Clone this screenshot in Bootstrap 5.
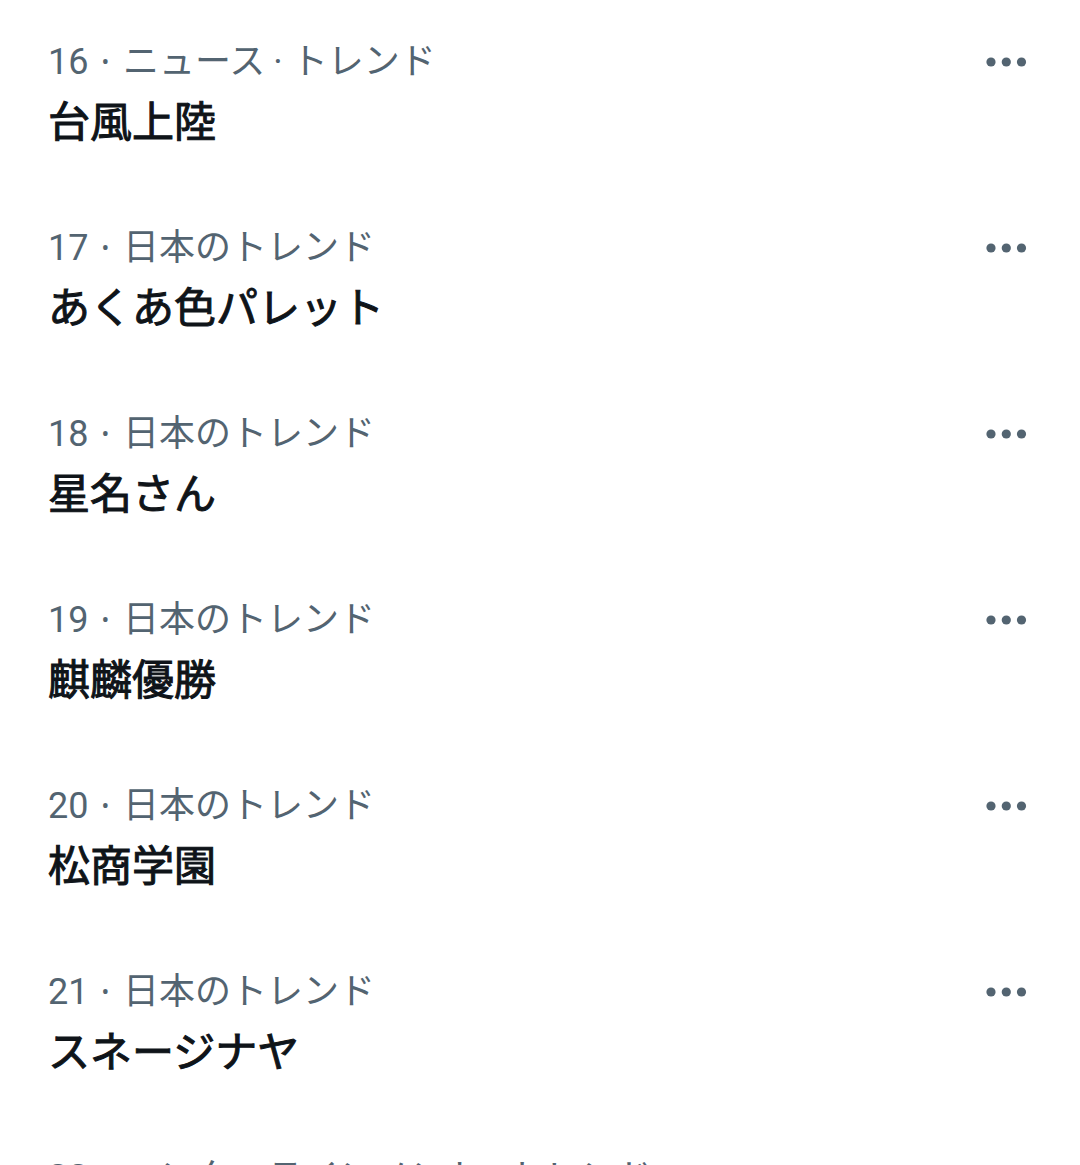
<!DOCTYPE html>
<html lang="ja">
<head>
<meta charset="utf-8">
<meta name="viewport" content="width=device-width, initial-scale=1">
<title>トレンド</title>
<link href="https://cdn.jsdelivr.net/npm/bootstrap@5.3.0/dist/css/bootstrap.min.css" rel="stylesheet">
<style>
  body { font-family: Roboto, "Noto Sans CJK JP", sans-serif; color: #0f1419; background: #fff; }
  .trend-list { height: 100vh; overflow: hidden; padding-top: 34px; }
  .trend-item { padding: 0 48px; height: 186px; }
  .trend-meta { color: #536471; font-size: 36px; line-height: 48px; }
  .trend-dot { margin: 0 4px 0 3px; font-family: "Noto Sans", sans-serif; }
  .trend-topic { font-family: "Noto Sans CJK JP", sans-serif; }
  .topic-dot { font-family: Roboto, sans-serif; margin-right: 1px; }
  .trend-name { font-size: 42px; line-height: 60px; margin-top: 7px; font-weight: 400; -webkit-text-stroke: 1px #0f1419; }
  .trend-name a { color: #0f1419; }
  .trend-more { color: #536471; width: 48px; height: 48px; margin-right: 2px; margin-top: 4px; line-height: 1; }
</style>
<script src="https://cdn.jsdelivr.net/npm/bootstrap@5.3.0/dist/js/bootstrap.bundle.min.js" defer></script>
</head>
<body>
<svg class="d-none" aria-hidden="true"><symbol id="more" viewBox="0 0 48 48"><circle cx="9" cy="24" r="4.6"/><circle cx="24.3" cy="24" r="4.6"/><circle cx="39.5" cy="24" r="4.6"/></symbol></svg>
<main class="trend-list">
<ul class="list-unstyled mb-0">
  <li class="trend-item d-flex justify-content-between align-items-start"><div class="text-nowrap"><div class="trend-meta">16 <span class="trend-dot">·</span> <span class="trend-topic">ニュース <span class="topic-dot">·</span> トレンド</span></div><h2 class="trend-name mb-0"><a class="text-decoration-none" href="#">台風上陸</a></h2></div><button type="button" class="trend-more btn p-0 border-0" aria-label="もっと見る"><svg class="d-block" width="48" height="48" fill="currentColor"><use href="#more"/></svg></button></li>
  <li class="trend-item d-flex justify-content-between align-items-start"><div class="text-nowrap"><div class="trend-meta">17 <span class="trend-dot">·</span> <span class="trend-topic">日本のトレンド</span></div><h2 class="trend-name mb-0"><a class="text-decoration-none" href="#">あくあ色パレット</a></h2></div><button type="button" class="trend-more btn p-0 border-0" aria-label="もっと見る"><svg class="d-block" width="48" height="48" fill="currentColor"><use href="#more"/></svg></button></li>
  <li class="trend-item d-flex justify-content-between align-items-start"><div class="text-nowrap"><div class="trend-meta">18 <span class="trend-dot">·</span> <span class="trend-topic">日本のトレンド</span></div><h2 class="trend-name mb-0"><a class="text-decoration-none" href="#">星名さん</a></h2></div><button type="button" class="trend-more btn p-0 border-0" aria-label="もっと見る"><svg class="d-block" width="48" height="48" fill="currentColor"><use href="#more"/></svg></button></li>
  <li class="trend-item d-flex justify-content-between align-items-start"><div class="text-nowrap"><div class="trend-meta">19 <span class="trend-dot">·</span> <span class="trend-topic">日本のトレンド</span></div><h2 class="trend-name mb-0"><a class="text-decoration-none" href="#">麒麟優勝</a></h2></div><button type="button" class="trend-more btn p-0 border-0" aria-label="もっと見る"><svg class="d-block" width="48" height="48" fill="currentColor"><use href="#more"/></svg></button></li>
  <li class="trend-item d-flex justify-content-between align-items-start"><div class="text-nowrap"><div class="trend-meta">20 <span class="trend-dot">·</span> <span class="trend-topic">日本のトレンド</span></div><h2 class="trend-name mb-0"><a class="text-decoration-none" href="#">松商学園</a></h2></div><button type="button" class="trend-more btn p-0 border-0" aria-label="もっと見る"><svg class="d-block" width="48" height="48" fill="currentColor"><use href="#more"/></svg></button></li>
  <li class="trend-item d-flex justify-content-between align-items-start"><div class="text-nowrap"><div class="trend-meta">21 <span class="trend-dot">·</span> <span class="trend-topic">日本のトレンド</span></div><h2 class="trend-name mb-0"><a class="text-decoration-none" href="#">スネージナヤ</a></h2></div><button type="button" class="trend-more btn p-0 border-0" aria-label="もっと見る"><svg class="d-block" width="48" height="48" fill="currentColor"><use href="#more"/></svg></button></li>
  <li class="trend-item d-flex justify-content-between align-items-start"><div class="text-nowrap"><div class="trend-meta">22 <span class="trend-dot">·</span> <span class="trend-topic">エンターテインメント <span class="topic-dot">·</span> トレンド</span></div></div><button type="button" class="trend-more btn p-0 border-0" aria-label="もっと見る"><svg class="d-block" width="48" height="48" fill="currentColor"><use href="#more"/></svg></button></li>
</ul>
</main>
</body>
</html>
